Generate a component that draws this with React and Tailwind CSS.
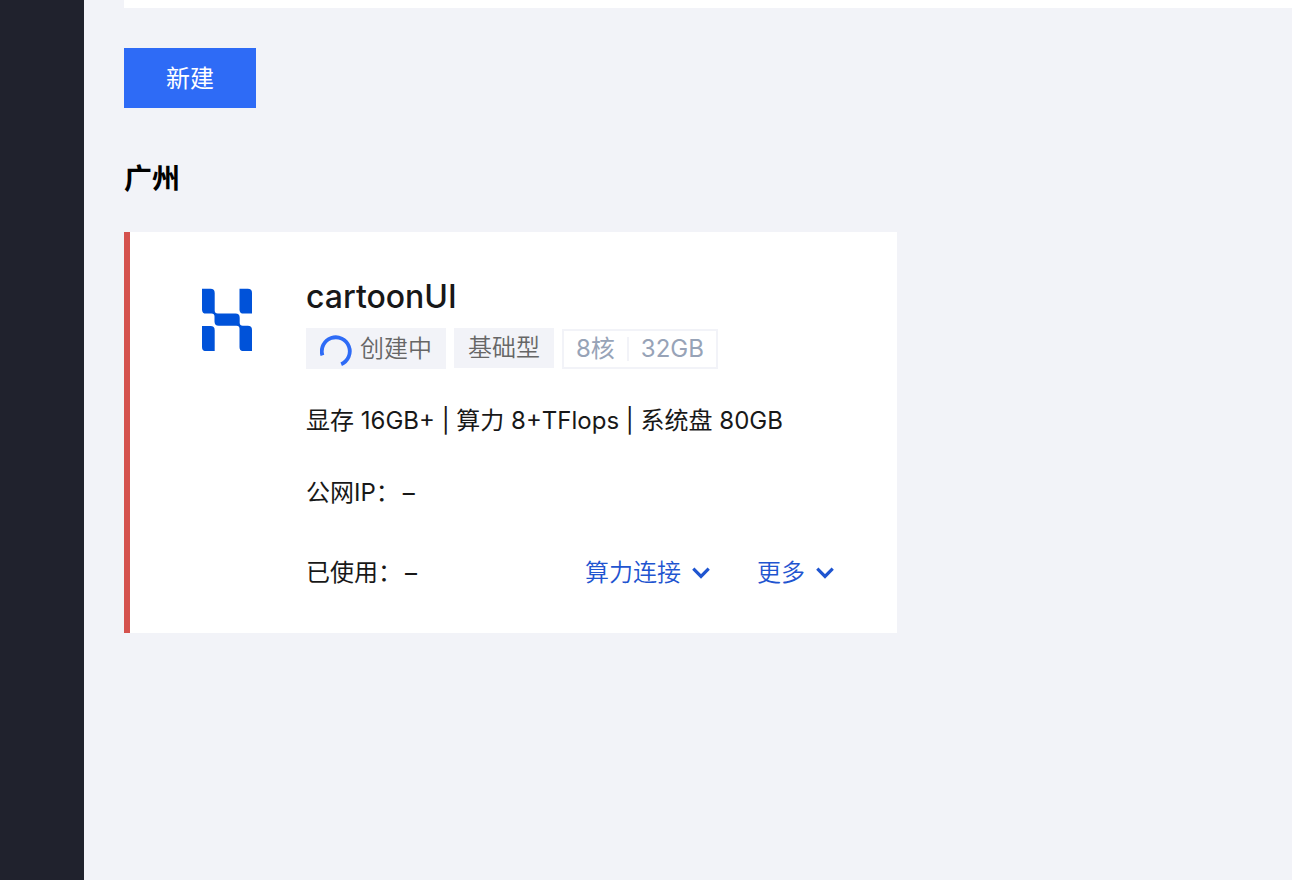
const SPECS = ["显存 16GB+", "算力 8+TFlops", "系统盘 80GB"];

const ACTIONS = ["算力连接", "更多"];

function Logo() {
  return (
    <svg width="50" height="63" viewBox="0 0 50 63" fill="#0052d9" aria-hidden="true">
      <path d="M0 .7H8.5Q12.7 .7 12.7 4.9V22.6Q12.7 25.6 15.7 25.6H33.5Q37.7 25.6 37.7 29.8V34.8Q37.7 37.8 40.7 37.8H45.8Q50 37.8 50 42V63.2H41.7Q37.5 63.2 37.5 59V40.8Q37.5 37.8 34.5 37.8H16.7Q12.5 37.8 12.5 33.6V28.6Q12.5 25.6 9.5 25.6H4.2Q0 25.6 0 21.4Z" />
      <path d="M37.5 .7H45.8Q50 .7 50 4.9V25.6H41.7Q37.5 25.6 37.5 21.4Z" />
      <path d="M0 38H8.5Q12.7 38 12.7 42.2V63.2H4.2Q0 63.2 0 59Z" />
    </svg>
  );
}

function Spinner() {
  return (
    <svg className="mt-1" width="32" height="32" viewBox="0 0 32 32" fill="none" aria-hidden="true">
      <path
        d="M2.4 20.4A14 14 0 1 1 21.2 29.2"
        stroke="#2e6bf6"
        strokeWidth="3.8"
      />
    </svg>
  );
}

function Chevron() {
  return (
    <svg width="18" height="12" viewBox="0 0 18 12" fill="none" aria-hidden="true">
      <path d="M1.3 1.7L9 9.4L16.7 1.7" stroke="#1f55d0" strokeWidth="3.2" />
    </svg>
  );
}

function Field({ label, value }) {
  return (
    <p>
      {label}：<span className="ml-[3px]">{value}</span>
    </p>
  );
}

function InstanceCard() {
  return (
    <article className="flex w-full max-w-[773px] gap-[54px] border-l-6 border-[#d5524e] bg-white pt-11 pr-[63px] pb-10 pl-[72px]">
      <div className="shrink-0 pt-3">
        <Logo />
      </div>

      <div className="min-w-0 flex-1">
        <h3 className="text-[32px] leading-[42px] font-medium">cartoonUI</h3>

        {/* Status and size tags */}
        <div className="mt-[10px] flex flex-wrap items-end gap-2 text-[#666666]">
          <span className="flex h-[41px] items-center gap-2 bg-[#f2f3f8] px-3.5">
            <Spinner />
            <span className="font-[350]">创建中</span>
          </span>
          <span className="flex h-10 items-center self-start bg-[#f2f3f8] px-3.5 font-[350]">
            基础型
          </span>
          <span className="flex h-10 items-center border-2 border-[#f2f3f8] px-3 text-[#97a3b7]">
            <span className="border-r-2 border-[#f2f3f8] pr-3 leading-6">8核</span>
            <span className="pl-3 leading-6">32GB</span>
          </span>
        </div>

        <p className="mt-8">{SPECS.join(" | ")}</p>

        <div className="mt-8">
          <Field label="公网IP" value="–" />
        </div>

        <div className="mt-10 flex flex-wrap items-center justify-between">
          <Field label="已使用" value="–" />
          <div className="flex gap-[47px]">
            {ACTIONS.map((action) => (
              <button
                key={action}
                type="button"
                className="flex cursor-pointer items-center gap-[11px] font-[350] text-[#1f55d0]"
              >
                {action}
                <Chevron />
              </button>
            ))}
          </div>
        </div>
      </div>
    </article>
  );
}

export default function App() {
  return (
    <div className="flex min-h-screen bg-[#f2f3f8] font-['Inter','Noto_Sans_CJK_SC',sans-serif] text-2xl leading-10 text-[#181818]">
      <aside className="w-21 shrink-0 bg-[#20222d]" />

      <main className="min-w-0 flex-1 pl-10">
        <div className="h-2 bg-white" />

        <button
          type="button"
          className="mt-10 flex h-15 cursor-pointer items-center bg-[#2e6bf6] px-[42px] pt-0.5 text-white"
        >
          新建
        </button>

        <h2 className="mt-[50px] mb-8 text-[28px] leading-[42px] font-bold text-black">广州</h2>

        <InstanceCard />
      </main>
    </div>
  );
}
